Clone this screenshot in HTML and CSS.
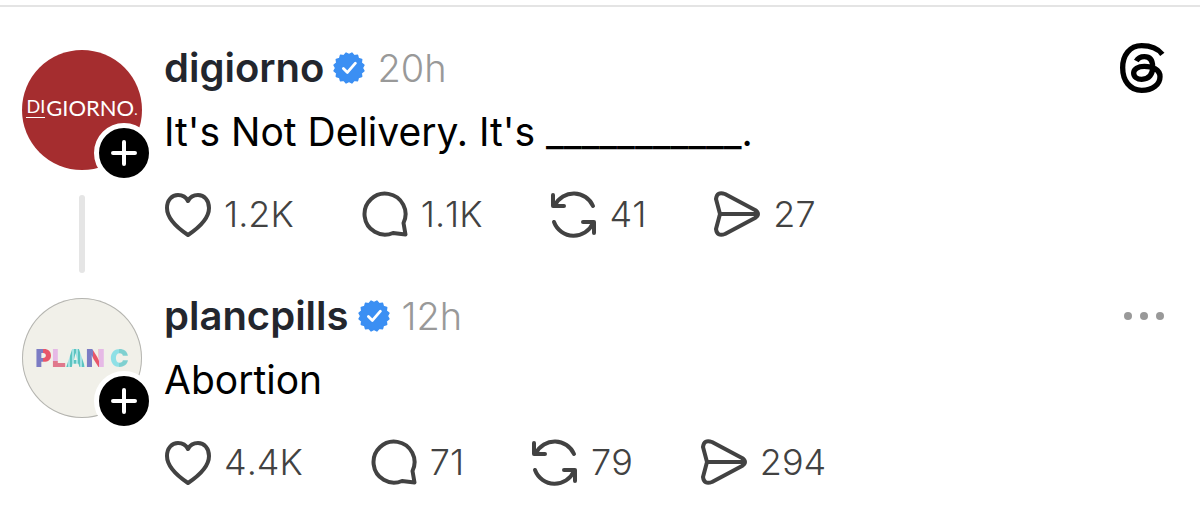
FILE: index.html
```html
<!DOCTYPE html>
<html lang="en">
<head>
  <meta charset="UTF-8" />
  <meta name="viewport" content="width=device-width, initial-scale=1" />
  <title>Thread</title>
  <link rel="stylesheet" href="styles.css">
</head>
<body>
  <!-- shared icons -->
  <svg class="sprite" aria-hidden="true">
    <symbol id="heart" viewBox="0 0 48 48">
      <path d="M24 45C15 39 3 30 3 18C3 10 8 5 14 5C19 5 22 7 24 11C26 7 29 5 34 5C40 5 45 10 45 18C45 30 33 39 24 45Z" />
    </symbol>
    <symbol id="comment" viewBox="0 0 48 48">
      <path d="M42.500 33A20.500 20.500 0 1 0 32 43L44.500 44.500Z" />
    </symbol>
    <symbol id="repost" viewBox="0 0 48 48">
      <path d="M43 16A21 21 0 0 0 5 15M3 5V16H14M4 32A21 21 0 0 0 43 33M33 32H44V43" />
    </symbol>
    <symbol id="send" viewBox="0 0 48 48">
      <path d="M12 4L42 20Q48 24 42 28L12 44Q4 47 3 39L7 24L3 9Q4 1 12 4ZM7 24H45" />
    </symbol>
    <symbol id="verified" viewBox="0 0 40 40">
      <path fill="#3b8ff3" stroke="#3b8ff3" stroke-width="2" stroke-linejoin="round" d="M20 3.500L23.700 1.400L26.300 4.800L30.600 4.200L31.700 8.300L35.800 9.400L35.200 13.700L38.600 16.300L36.500 20L38.600 23.700L35.200 26.300L35.800 30.600L31.700 31.700L30.600 35.800L26.300 35.200L23.700 38.600L20 36.500L16.300 38.600L13.700 35.200L9.400 35.800L8.300 31.700L4.200 30.600L4.800 26.300L1.400 23.700L3.500 20L1.400 16.300L4.800 13.700L4.200 9.400L8.300 8.300L9.400 4.200L13.700 4.800L16.300 1.400Z" />
      <path fill="none" stroke="#fff" stroke-width="3.500" stroke-linecap="round" stroke-linejoin="round" d="M13 20.500L18 25.500L28 14" />
    </symbol>
  </svg>

  <main class="thread">
    <article class="post">
      <div class="side">
        <div class="avatar avatar-digiorno">
          <span class="logo-digiorno"><span class="logo-di">DI</span>GIORNO<span class="logo-dot">.</span></span>
          <button class="follow" aria-label="Follow digiorno">
            <svg viewBox="0 0 50 50"><path d="M25 14V36M14 25H36" /></svg>
          </button>
        </div>
        <div class="line"></div>
      </div>
      <div class="content">
        <header class="head">
          <a class="name" href="#">digiorno</a>
          <svg class="verified" role="img" aria-label="Verified"><use href="#verified" /></svg>
          <time class="time">20h</time>
          <a class="brand" href="#" aria-label="Threads">
            <svg viewBox="92 38 135 150">
              <path d="M219 72C204 52 180 46 157 46C121 46 100 75 100 112C100 150 121 180 157 180C190 180 212 162 212 139C212 118 190 108 165 108C146 108 133 116 133 128C133 140 144 147 157 147C180 147 190 132 190 110C190 88 180 79 165 79C153 79 146 83 141 92" />
            </svg>
          </a>
        </header>
        <p class="text">It's Not Delivery. It's ___________.</p>
        <div class="actions">
          <button class="action" aria-label="Like"><svg><use href="#heart" /></svg><span>1.2K</span></button>
          <button class="action" aria-label="Reply"><svg><use href="#comment" /></svg><span>1.1K</span></button>
          <button class="action" aria-label="Repost"><svg><use href="#repost" /></svg><span>41</span></button>
          <button class="action" aria-label="Share"><svg><use href="#send" /></svg><span>27</span></button>
        </div>
      </div>
    </article>

    <article class="post">
      <div class="side">
        <div class="avatar avatar-planc">
          <span class="logo-planc"><span class="p">P</span><span class="l">L</span><span class="a">A</span><span class="n">N</span> <span class="c">C</span></span>
          <button class="follow" aria-label="Follow plancpills">
            <svg viewBox="0 0 50 50"><path d="M25 14V36M14 25H36" /></svg>
          </button>
        </div>
      </div>
      <div class="content">
        <header class="head">
          <a class="name" href="#">plancpills</a>
          <svg class="verified" role="img" aria-label="Verified"><use href="#verified" /></svg>
          <time class="time">12h</time>
          <button class="more" aria-label="More">
            <svg viewBox="0 0 42 10"><circle cx="5" cy="5" r="4" /><circle cx="21" cy="5" r="4" /><circle cx="37" cy="5" r="4" /></svg>
          </button>
        </header>
        <p class="text">Abortion</p>
        <div class="actions">
          <button class="action" aria-label="Like"><svg><use href="#heart" /></svg><span>4.4K</span></button>
          <button class="action" aria-label="Reply"><svg><use href="#comment" /></svg><span>71</span></button>
          <button class="action" aria-label="Repost"><svg><use href="#repost" /></svg><span>79</span></button>
          <button class="action" aria-label="Share"><svg><use href="#send" /></svg><span>294</span></button>
        </div>
      </div>
    </article>
  </main>
</body>
</html>
```
FILE: styles.css
```css
* {
  box-sizing: border-box;
}

body {
  margin: 0;
  background: #fff;
  color: #000;
  font-family: Inter, "Liberation Sans", sans-serif;
}

button {
  padding: 0;
  border: none;
  background: none;
  font: inherit;
  cursor: pointer;
}

svg {
  display: block;
}

.sprite {
  display: none;
}

.thread {
  margin-top: 5px;
  padding: 37px 35px 0 22px;
  border-top: 2px solid #e4e4e4;
}

.post {
  display: flex;
  gap: 22px;
}

.side {
  display: flex;
  flex-direction: column;
  align-items: center;
  gap: 25px;
  padding: 6px 0 19px;
}

.avatar {
  position: relative;
  display: flex;
  align-items: center;
  justify-content: center;
  width: 120px;
  height: 120px;
  border-radius: 50%;
}

.avatar-digiorno {
  background: #a52d2f;
}

.avatar-planc {
  background: #f1f0e9;
  box-shadow: inset 0 0 0 1px #b4b4b0;
}

.follow {
  position: absolute;
  right: -12px;
  bottom: -13px;
  width: 60px;
  height: 60px;
  border: 5px solid #fff;
  border-radius: 50%;
  background: #000;
}

.follow path {
  fill: none;
  stroke: #fff;
  stroke-width: 4;
  stroke-linecap: round;
}

.line {
  flex: 1;
  width: 6px;
  border-radius: 3px;
  background: #e5e5e5;
}

/* avatar wordmarks */
.logo-digiorno {
  display: flex;
  align-items: flex-start;
  color: #fff;
  font-family: Lato, sans-serif;
  font-size: 22px;
  line-height: 26px;
}

.logo-di {
  margin-right: 1px;
  border-bottom: 1px solid #fff;
  font-size: 18px;
  line-height: 22px;
}

.logo-dot {
  font-size: 14px;
  line-height: 30px;
}

.logo-planc {
  font-size: 25px;
  font-weight: 900;
  line-height: 32px;
}

.logo-planc span {
  background-clip: text;
  -webkit-background-clip: text;
  color: transparent;
}

.logo-planc .p {
  background-image: linear-gradient(90deg, #7c7cc4 45%, #e8566a 45%);
}

.logo-planc .l {
  background-image: linear-gradient(#e6b9e6 60%, #e0788c 60%);
}

.logo-planc .a {
  background-image: repeating-linear-gradient(90deg, #5cc4c0 0 2px, #a4e2e4 2px 4px);
}

.logo-planc .n {
  background-image: linear-gradient(90deg, #7c7cc4 35%, #e8566a 35% 70%, #e6b9e6 70%);
}

.logo-planc .c {
  background-image: linear-gradient(90deg, #8fe0e6 50%, #7fd0d0 50%);
}

.content {
  flex: 1;
  padding-bottom: 54px;
}

.head {
  display: flex;
  align-items: center;
  height: 48px;
}

.name {
  color: #23262d;
  font-size: 40px;
  font-weight: 600;
  line-height: 48px;
  text-decoration: none;
}

.verified {
  width: 32px;
  height: 32px;
  margin: 0 12px 0 9px;
}

.time {
  color: #999;
  font-size: 38px;
  font-weight: 300;
}

.brand,
.more {
  margin-left: auto;
}

.brand svg {
  width: 45px;
  height: 50px;
}

.brand path {
  fill: none;
  stroke: #000;
  stroke-width: 16;
}

.more svg {
  width: 42px;
  height: 10px;
  fill: #999;
}

.text {
  margin: 16px 0 34px;
  font-size: 39px;
  line-height: 48px;
}

.actions {
  display: flex;
  gap: 67px;
}

.action {
  display: flex;
  align-items: center;
  gap: 12px;
  color: #424242;
  font-size: 36px;
  font-weight: 300;
  font-kerning: none;
  line-height: 48px;
}

.action svg {
  width: 48px;
  height: 48px;
  fill: none;
  stroke: #424242;
  stroke-width: 4;
  stroke-linecap: round;
  stroke-linejoin: round;
}
```
